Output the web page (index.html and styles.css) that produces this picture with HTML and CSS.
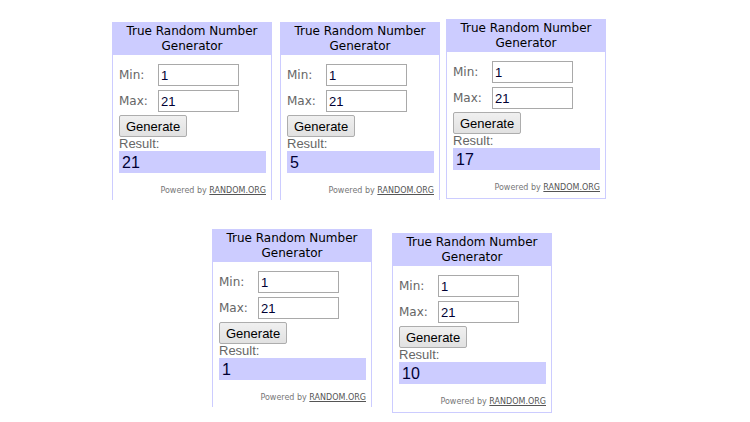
FILE: index.html
```html
<!DOCTYPE html>
<html lang="en">
<head>
    <meta charset="UTF-8">
    <title>True Random Number Generator</title>
    <link rel="stylesheet" href="styles.css">
</head>
<body>
    <div class="rows">
        <div class="row row-top">
            <div class="widget w1">
                <div class="head">True Random Number Generator</div>
                <div class="body">
                    <div class="field"><span class="lbl">Min:</span><input type="text" value="1"></div>
                    <div class="field"><span class="lbl">Max:</span><input type="text" value="21"></div>
                    <button type="button">Generate</button>
                    <div class="res-lbl">Result:</div>
                    <div class="result">21</div>
                    <div class="powered">Powered by <a href="#">RANDOM.ORG</a></div>
                </div>
            </div>
            <div class="widget w2">
                <div class="head">True Random Number Generator</div>
                <div class="body">
                    <div class="field"><span class="lbl">Min:</span><input type="text" value="1"></div>
                    <div class="field"><span class="lbl">Max:</span><input type="text" value="21"></div>
                    <button type="button">Generate</button>
                    <div class="res-lbl">Result:</div>
                    <div class="result">5</div>
                    <div class="powered">Powered by <a href="#">RANDOM.ORG</a></div>
                </div>
            </div>
            <div class="widget w3 closed">
                <div class="head">True Random Number Generator</div>
                <div class="body">
                    <div class="field"><span class="lbl">Min:</span><input type="text" value="1"></div>
                    <div class="field"><span class="lbl">Max:</span><input type="text" value="21"></div>
                    <button type="button">Generate</button>
                    <div class="res-lbl">Result:</div>
                    <div class="result">17</div>
                    <div class="powered">Powered by <a href="#">RANDOM.ORG</a></div>
                </div>
            </div>
        </div>
        <div class="row row-bottom">
            <div class="widget w4">
                <div class="head">True Random Number Generator</div>
                <div class="body">
                    <div class="field"><span class="lbl">Min:</span><input type="text" value="1"></div>
                    <div class="field"><span class="lbl">Max:</span><input type="text" value="21"></div>
                    <button type="button">Generate</button>
                    <div class="res-lbl">Result:</div>
                    <div class="result">1</div>
                    <div class="powered">Powered by <a href="#">RANDOM.ORG</a></div>
                </div>
            </div>
            <div class="widget w5 closed">
                <div class="head">True Random Number Generator</div>
                <div class="body">
                    <div class="field"><span class="lbl">Min:</span><input type="text" value="1"></div>
                    <div class="field"><span class="lbl">Max:</span><input type="text" value="21"></div>
                    <button type="button">Generate</button>
                    <div class="res-lbl">Result:</div>
                    <div class="result">10</div>
                    <div class="powered">Powered by <a href="#">RANDOM.ORG</a></div>
                </div>
            </div>
        </div>
    </div>
</body>
</html>
```

FILE: styles.css
```css
body {
    margin: 0;
    background-color: #fff;
    font-family: "DejaVu Sans", Verdana, sans-serif;
    color: #000;
}
.row {
    display: flex;
    align-items: flex-start;
}
.row-top {
    padding-left: 112px;
    height: 207px;
}
.row-bottom {
    padding-left: 212px;
}
.widget {
    box-sizing: border-box;
    width: 160px;
    height: 178px;
    border: 1px solid #ccccff;
    border-bottom: none;
    background: #fff;
}
.widget.closed {
    height: 180px;
    border-bottom: 1px solid #ccccff;
}
.w1 { margin-top: 22px; }
.w2 { margin-top: 22px; margin-left: 8px; }
.w3 { margin-top: 19px; margin-left: 6px; }
.w4 { margin-top: 22px; }
.w5 { margin-top: 26px; margin-left: 20px; }
.head {
    background-color: #ccccff;
    margin: -1px -1px 0;
    height: 31px;
    padding: 2px 14px 0;
    font-size: 12px;
    line-height: 15px;
    text-align: center;
    color: #000;
}
.body {
    padding: 9px 5px 0 6px;
}
.field {
    display: flex;
    align-items: center;
    margin-bottom: 4px;
}
.lbl {
    width: 39px;
    font-size: 12px;
    color: #666;
}
input {
    box-sizing: border-box;
    width: 81px;
    height: 22px;
    margin: 0;
    padding: 1px 2px;
    border: 1px solid #a9a9a9;
    font-family: "Liberation Sans", Arial, sans-serif;
    font-size: 13px;
    color: #000033;
}
button {
    display: block;
    height: 22px;
    margin-top: -1px;
    padding: 0 6px;
    border: 1px solid #adadad;
    border-radius: 2px;
    background: linear-gradient(#f0f0f0, #e1e1e1);
    font-family: "Liberation Sans", Arial, sans-serif;
    font-size: 13px;
    color: #000;
}
.res-lbl {
    font-family: "Liberation Sans", Arial, sans-serif;
    font-size: 13px;
    line-height: 14px;
    color: #666;
}
.result {
    height: 22px;
    padding-left: 3px;
    background-color: #ccccff;
    font-family: "Liberation Sans", Arial, sans-serif;
    font-size: 16px;
    line-height: 23px;
    color: #000033;
}
.powered {
    margin-top: 13px;
    text-align: right;
    font-family: "DejaVu Sans", Verdana, sans-serif;
    font-size: 8px;
    color: #777;
}
.powered a {
    color: #555;
}
```
